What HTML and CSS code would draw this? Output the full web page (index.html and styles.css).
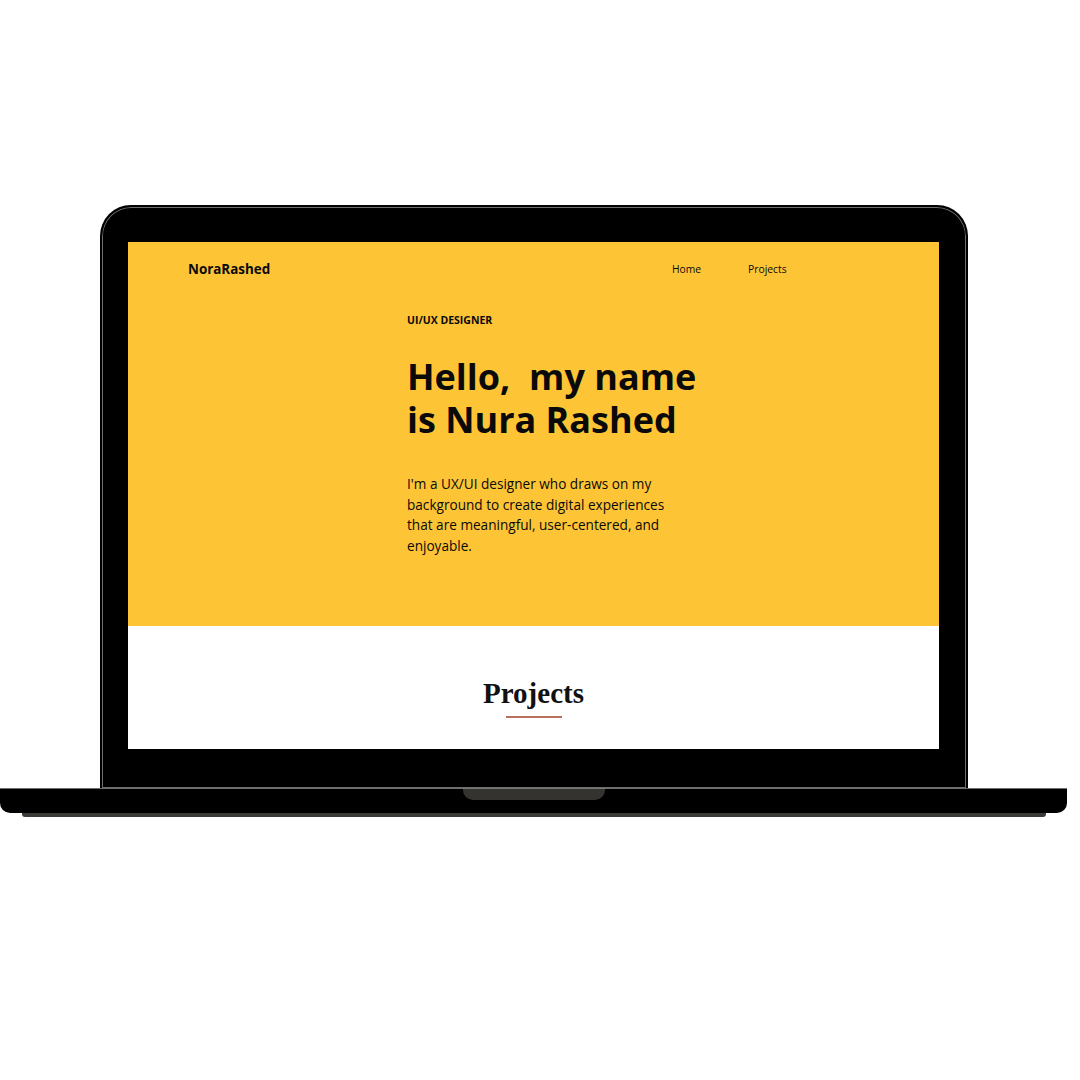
FILE: index.html
```html
<!DOCTYPE html>
<html lang="en">
<head>
<meta charset="utf-8">
<title>Nora Rashed – Laptop mockup</title>
<link rel="stylesheet" href="styles.css">
</head>
<body>
<div class="stage">
  <div class="lid">
    <div class="screen">
      <section class="hero">
        <nav class="nav">
          <div class="logo">NoraRashed</div>
          <ul class="menu">
            <li>Home</li>
            <li>Projects</li>
          </ul>
        </nav>
        <div class="intro">
          <p class="eyebrow">UI/UX DESIGNER</p>
          <h1 class="title">Hello,&nbsp; my name<br>is Nura Rashed</h1>
          <p class="lead">I'm a UX/UI designer who draws on my background to create digital experiences that are meaningful, user-centered, and enjoyable.</p>
        </div>
      </section>
      <section class="projects">
        <h2 class="projects-title">Projects</h2>
        <div class="rule"></div>
      </section>
    </div>
  </div>
  <div class="base">
    <div class="notch"></div>
  </div>
  <div class="foot"></div>
</div>
</body>
</html>
```

FILE: styles.css
```css
* { box-sizing: border-box; }
html, body {
  margin: 0;
  padding: 0;
  background: #fff;
  font-family: "Open Sans", "Noto Sans", sans-serif;
}
.stage {
  width: 1080px;
  height: 1080px;
  padding-top: 205px;
}
.lid {
  margin-left: 100px;
  width: 868px;
  height: 583px;
  background: #000;
  border: 2px solid #000;
  border-bottom: 0;
  border-radius: 31px 31px 0 0;
  box-shadow: inset 0 0 0 1px #6e6e6e;
  padding: 35px 27px 0 26px;
}
.screen {
  width: 811px;
  height: 507px;
  background: #fff;
  display: flex;
  flex-direction: column;
}
.hero {
  background: #fdc436;
  height: 384px;
  color: #0a0a0a;
}
.nav {
  display: flex;
  align-items: center;
  height: 54px;
  padding: 0 0 0 60px;
}
.logo {
  font-weight: 700;
  font-size: 13.4px;
  width: 484px;
}
.menu {
  list-style: none;
  margin: 0;
  padding: 0;
  display: flex;
  gap: 47px;
  font-size: 10.3px;
}
.intro {
  padding-left: 279px;
}
.eyebrow {
  margin: 16px 0 0;
  font-size: 10.5px;
  font-weight: 700;
  line-height: 16px;
}
.title {
  margin: 27px 0 0;
  font-size: 36px;
  font-weight: 700;
  line-height: 43.2px;
  letter-spacing: 0;
}
.lead {
  margin: 33px 0 0;
  width: 270px;
  font-size: 13.6px;
  line-height: 20.4px;
}
.projects {
  flex: 1;
  display: flex;
  flex-direction: column;
  align-items: center;
  padding-top: 50px;
}
.projects-title {
  margin: 0;
  font-family: "Liberation Serif", "DejaVu Serif", serif;
  font-weight: 700;
  font-size: 29px;
  line-height: 34px;
  color: #111;
  letter-spacing: 0;
}
.rule {
  margin-top: 6px;
  width: 56px;
  height: 2px;
  background: #b8705a;
}
.base {
  width: 1067px;
  height: 25px;
  background: #000;
  border-radius: 0 0 10px 10px;
  border-top: 1px solid #6e6e6e;
  display: flex;
  justify-content: center;
  padding-left: 1px;
}
.notch {
  width: 142px;
  height: 12px;
  background: #343330;
  border-radius: 0 0 10px 10px;
  border-top: 1px solid #777;
  margin-top: -1px;
}
.foot {
  margin-left: 22px;
  width: 1024px;
  height: 4px;
  background: #3a3a36;
  border-radius: 0 0 3px 3px;
}
```
